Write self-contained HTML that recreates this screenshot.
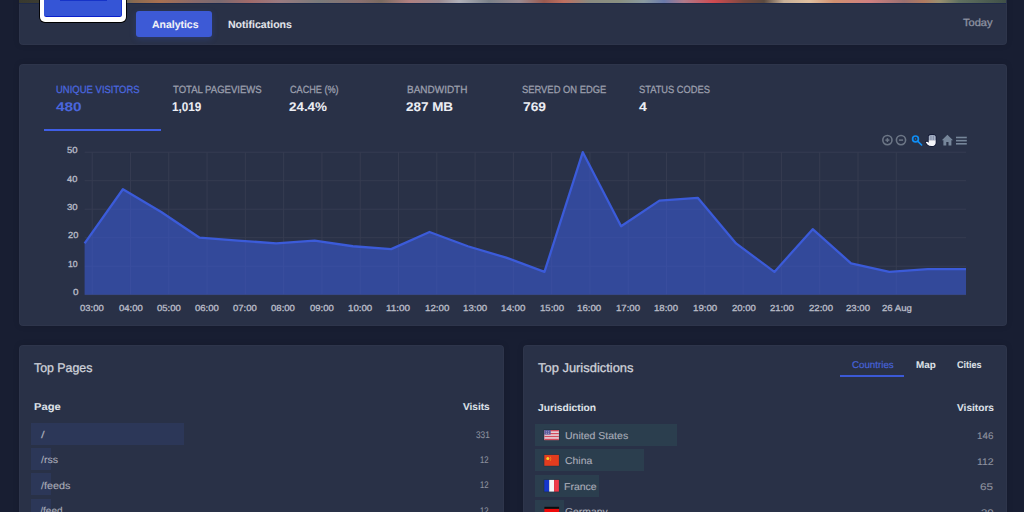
<!DOCTYPE html>
<html><head><meta charset="utf-8"><style>
html,body{margin:0;padding:0;width:1024px;height:512px;overflow:hidden;background:#181e32;font-family:"Liberation Sans",sans-serif;}
.card{position:absolute;background:#293147;border-radius:4px;box-shadow:0 0 6px rgba(0,0,0,0.12), inset 0 0 0 1px rgba(255,255,255,0.025);}
.t{position:absolute;white-space:pre;transform-origin:0 0;text-rendering:geometricPrecision;}

.ov{position:absolute;left:0;top:0;}
.bar{position:absolute;height:22.1px;}
</style></head><body>
<div class="card" style="left:19.3px;top:-20px;width:987.9px;height:64.5px;overflow:hidden;">
  <div style="position:absolute;left:0;top:20px;width:987px;height:2.8px;background:linear-gradient(90deg,#38392f 0px,#3c3c32 20px,#6a6a5a 106px,#8a6a50 115px,#a87050 140px,#8a6a6a 175px,#7a6a70 200px,#a06a6a 230px,#9a7a80 260px,#7a7a7a 300px,#8a7070 340px,#7a6a60 362px,#b08080 390px,#9a8a90 420px,#b0b0b8 440px,#7a8088 470px,#9a8a90 500px,#9a5a50 525px,#c07060 545px,#8a8a80 570px,#8a9080 600px,#8a9aa0 625px,#6a7aaa 645px,#b07a8a 665px,#d04a50 695px,#7a4a40 725px,#5a4a40 745px,#c8b098 765px,#e0c0a0 790px,#d09070 815px,#d08080 850px,#9a7070 885px,#b07a60 905px,#9a9070 920px,#607060 940px,#405048 987px);"></div>
  <div style="position:absolute;left:0;top:22.8px;width:987px;height:1px;background:#1e2a4a;"></div>
</div>
<div style="position:absolute;left:39.7px;top:-20px;width:86.4px;height:42px;background:#ffffff;border-radius:0 0 5px 5px;box-shadow:0 0 0 0.9px #000;"></div>
<div style="position:absolute;left:43.8px;top:-20px;width:78.6px;height:37px;background:#3555d6;border-radius:0 0 2.5px 2.5px;border-bottom:1.5px solid #0a20cc;border-right:0.8px solid #1a35d0;box-sizing:border-box;"></div>
<div style="position:absolute;left:60.2px;top:0px;width:46.8px;height:1.3px;background:#1633c8;"></div>
<div style="position:absolute;left:136.3px;top:10.5px;width:76px;height:26.5px;background:#3d5ad6;border-radius:3px;box-shadow:0 2px 6px rgba(61,90,214,0.25);"></div>

<div class="card" style="left:19.3px;top:64px;width:987.9px;height:261.8px;"></div>
<div style="position:absolute;left:43.6px;top:128.6px;width:117.6px;height:2.2px;background:#3f5ee6;"></div>

<div class="card" style="left:19.3px;top:344.8px;width:484.7px;height:200px;"></div>
<div class="card" style="left:523px;top:344.8px;width:484.2px;height:200px;"></div>
<div style="position:absolute;left:840px;top:374.7px;width:64.2px;height:1.9px;background:#3b59d6;"></div>

<div class="bar" style="left:31.2px;top:422.7px;width:152.5px;background:#2c3758;"></div>
<div class="bar" style="left:31.2px;top:447.9px;width:20px;background:#2c3758;"></div>
<div class="bar" style="left:31.2px;top:473.1px;width:20px;background:#2c3758;"></div>
<div class="bar" style="left:31.2px;top:498.5px;width:20px;background:#2c3758;"></div>

<div class="bar" style="left:534.6px;top:423.5px;width:142.4px;background:#2b3e4e;"></div>
<div class="bar" style="left:534.6px;top:449.2px;width:109.4px;background:#2b3e4e;"></div>
<div class="bar" style="left:534.6px;top:474.6px;width:64.0px;background:#2b3e4e;"></div>
<div class="bar" style="left:534.6px;top:499.9px;width:29.4px;background:#2b3e4e;"></div>
<svg class="ov" width="1024" height="512" viewBox="0 0 1024 512">
  <rect x="543.7" y="429.4" width="15.8" height="11.2" fill="#1c2c3c" opacity="0.6"/>
  <rect x="544.3" y="430" width="14.6" height="10.1" fill="#e6dde4"/>
  <rect x="544.3" y="430" width="14.6" height="1.4" fill="#d24a5c"/>
  <rect x="544.3" y="432.9" width="14.6" height="1.4" fill="#d24a5c"/>
  <rect x="544.3" y="435.8" width="14.6" height="1.4" fill="#d24a5c"/>
  <rect x="544.3" y="438.7" width="14.6" height="1.4" fill="#d24a5c"/>
  <rect x="544.3" y="430" width="6.4" height="4.6" fill="#5a5b9c"/>
  <g fill="#b8b8d8"><circle cx="546.3" cy="431.8" r="0.5"/><circle cx="548.6" cy="431.8" r="0.5"/><circle cx="546.3" cy="433.3" r="0.5"/><circle cx="548.6" cy="433.3" r="0.5"/></g>
  <rect x="543.7" y="454.3" width="15.8" height="12.1" fill="#1c2c3c" opacity="0.6"/>
  <rect x="544.3" y="454.9" width="14.6" height="10.9" fill="#e23c1e"/>
  <circle cx="547.8" cy="458.4" r="1.5" fill="#f8d52a"/>
  <path d="M550.2,456.6 Q551.6,458.6 550.2,461" stroke="#f0a020" stroke-width="0.6" fill="none"/>
  <rect x="543.7" y="479.3" width="15.8" height="12.9" fill="#1c2c3c" opacity="0.6"/>
  <rect x="544.3" y="479.9" width="4.9" height="11.7" fill="#1535cc"/>
  <rect x="549.2" y="479.9" width="4.9" height="11.7" fill="#f4f4f6"/>
  <rect x="554.1" y="479.9" width="4.8" height="11.7" fill="#f03848"/>
  <rect x="544.4" y="506.8" width="14.7" height="2.1" fill="#0a0e0e"/>
  <rect x="544.4" y="508.9" width="14.7" height="4" fill="#ee0a0a"/>
</svg>
<svg class="ov" width="1024" height="512" viewBox="0 0 1024 512">
<g stroke="#363c51" stroke-width="1" fill="none"><line x1="84.6" y1="294.70" x2="966.0" y2="294.70" /><line x1="84.6" y1="266.20" x2="966.0" y2="266.20" /><line x1="84.6" y1="237.70" x2="966.0" y2="237.70" /><line x1="84.6" y1="209.20" x2="966.0" y2="209.20" /><line x1="84.6" y1="180.70" x2="966.0" y2="180.70" /><line x1="84.6" y1="152.20" x2="966.0" y2="152.20" /><line x1="92.20" y1="152.2" x2="92.20" y2="294.7" /><line x1="130.49" y1="152.2" x2="130.49" y2="294.7" /><line x1="168.78" y1="152.2" x2="168.78" y2="294.7" /><line x1="207.07" y1="152.2" x2="207.07" y2="294.7" /><line x1="245.36" y1="152.2" x2="245.36" y2="294.7" /><line x1="283.65" y1="152.2" x2="283.65" y2="294.7" /><line x1="321.94" y1="152.2" x2="321.94" y2="294.7" /><line x1="360.23" y1="152.2" x2="360.23" y2="294.7" /><line x1="398.52" y1="152.2" x2="398.52" y2="294.7" /><line x1="436.81" y1="152.2" x2="436.81" y2="294.7" /><line x1="475.10" y1="152.2" x2="475.10" y2="294.7" /><line x1="513.39" y1="152.2" x2="513.39" y2="294.7" /><line x1="551.68" y1="152.2" x2="551.68" y2="294.7" /><line x1="589.97" y1="152.2" x2="589.97" y2="294.7" /><line x1="628.26" y1="152.2" x2="628.26" y2="294.7" /><line x1="666.55" y1="152.2" x2="666.55" y2="294.7" /><line x1="704.84" y1="152.2" x2="704.84" y2="294.7" /><line x1="743.13" y1="152.2" x2="743.13" y2="294.7" /><line x1="781.42" y1="152.2" x2="781.42" y2="294.7" /><line x1="819.71" y1="152.2" x2="819.71" y2="294.7" /><line x1="858.00" y1="152.2" x2="858.00" y2="294.7" /><line x1="896.29" y1="152.2" x2="896.29" y2="294.7" /></g>
<path d="M84.6,294.7 L84.60,243.40 L122.92,189.25 L161.24,212.05 L199.57,237.70 L237.89,240.55 L276.21,243.40 L314.53,240.55 L352.85,246.25 L391.17,249.10 L429.50,232.00 L467.82,246.25 L506.14,257.65 L544.46,271.90 L582.78,152.20 L621.10,226.30 L659.43,200.65 L697.75,197.80 L736.07,243.40 L774.39,271.90 L812.71,229.15 L851.03,263.35 L889.36,271.90 L927.68,269.05 L966.00,269.05 L966.0,294.7 Z" fill="rgb(61,93,223)" fill-opacity="0.55" />
<path d="M84.60,243.40 L122.92,189.25 L161.24,212.05 L199.57,237.70 L237.89,240.55 L276.21,243.40 L314.53,240.55 L352.85,246.25 L391.17,249.10 L429.50,232.00 L467.82,246.25 L506.14,257.65 L544.46,271.90 L582.78,152.20 L621.10,226.30 L659.43,200.65 L697.75,197.80 L736.07,243.40 L774.39,271.90 L812.71,229.15 L851.03,263.35 L889.36,271.90 L927.68,269.05 L966.00,269.05" fill="none" stroke="#3b5bd9" stroke-width="2.3" stroke-linejoin="round" />
<g fill="none" stroke="#6c7686" stroke-width="1.6">
  <circle cx="887.4" cy="140.1" r="4.6"/>
  <circle cx="901.0" cy="140.1" r="4.6"/>
</g>
<g stroke="#6c7686" stroke-width="1.5"><line x1="885.4" y1="140.1" x2="889.4" y2="140.1"/><line x1="887.4" y1="138.1" x2="887.4" y2="142.1"/><line x1="898.9" y1="140.1" x2="903.1" y2="140.1"/></g>
<g fill="none" stroke="#0f8ef5" stroke-width="1.7" stroke-linecap="round">
  <circle cx="915.5" cy="138.9" r="2.9"/><line x1="917.9" y1="141.4" x2="921.6" y2="145.0"/>
</g>
<circle cx="915.5" cy="138.9" r="0.7" fill="#0f8ef5"/>
<path d="M928.0,136.2 Q928.2,134.3 930.5,134.2 L933.8,134.2 Q936.3,134.3 936.4,136.6 L936.4,143.0 Q936.2,146.8 931.6,146.8 Q928.6,146.8 926.8,145.0 L924.9,142.4 Q925.4,140.3 927.9,141.0 Z" fill="#0b1230"/>
<path d="M928.7,136.6 Q928.9,135.0 930.6,134.9 L933.7,134.9 Q935.6,135.0 935.7,136.8 L935.7,140.6 L928.7,140.6 Z" fill="#a9b4c8"/>
<path d="M930.95,135.3 L930.95,140.2 M933.3,135.3 L933.3,140.2" stroke="#7987a0" stroke-width="0.9" fill="none"/>
<path d="M928.7,140.3 L935.7,140.3 L935.7,143.0 Q935.5,146.1 931.6,146.1 Q929.0,146.1 927.4,144.5 L925.7,142.3 Q926.2,141.3 927.4,141.8 L928.7,142.8 Z" fill="#f3f4f8"/>
<path d="M947.4,134.8 L953.0,140.3 L951.4,140.3 L951.4,145.5 L948.5,145.5 L948.5,142.0 L946.3,142.0 L946.3,145.5 L943.4,145.5 L943.4,140.3 L941.8,140.3 Z" fill="#76869a"/>
<g stroke="#76869a" stroke-width="1.6"><line x1="956.0" y1="137.5" x2="966.8" y2="137.5"/><line x1="956.0" y1="140.65" x2="966.8" y2="140.65"/><line x1="956.0" y1="143.8" x2="966.8" y2="143.8"/></g>
</svg>
<div class="t" style="-webkit-text-stroke:0.05px currentColor;left:151.59px;top:20.00px;font-size:10.60px;line-height:10.60px;font-weight:bold;color:#f2f3f8;transform:scaleX(0.9867);">Analytics</div><div class="t" style="-webkit-text-stroke:0.05px currentColor;left:227.54px;top:20.00px;font-size:10.60px;line-height:10.60px;font-weight:bold;color:#e2e4ea;transform:scaleX(0.9964);">Notifications</div><div class="t" style="-webkit-text-stroke:0.3px currentColor;left:963.22px;top:19.00px;font-size:10.40px;line-height:10.40px;font-weight:normal;color:#8e93a2;transform:scaleX(1.0638);">Today</div><div class="t" style="-webkit-text-stroke:0.3px currentColor;left:56.37px;top:86.00px;font-size:10.40px;line-height:10.40px;font-weight:normal;color:#4a66dd;transform:scaleX(0.9135);">UNIQUE VISITORS</div><div class="t" style="-webkit-text-stroke:0.05px currentColor;left:56.47px;top:101.00px;font-size:12.60px;line-height:12.60px;font-weight:bold;color:#4a66dd;transform:scaleX(1.2212);">480</div><div class="t" style="-webkit-text-stroke:0.3px currentColor;left:172.65px;top:86.00px;font-size:10.40px;line-height:10.40px;font-weight:normal;color:#9a9eac;transform:scaleX(0.9171);">TOTAL PAGEVIEWS</div><div class="t" style="-webkit-text-stroke:0.05px currentColor;left:171.77px;top:101.00px;font-size:12.60px;line-height:12.60px;font-weight:bold;color:#eceef4;transform:scaleX(0.9327);">1,019</div><div class="t" style="-webkit-text-stroke:0.3px currentColor;left:289.51px;top:86.00px;font-size:10.40px;line-height:10.40px;font-weight:normal;color:#9a9eac;transform:scaleX(0.8781);">CACHE (%)</div><div class="t" style="-webkit-text-stroke:0.05px currentColor;left:289.01px;top:101.00px;font-size:12.60px;line-height:12.60px;font-weight:bold;color:#eceef4;transform:scaleX(1.0635);">24.4%</div><div class="t" style="-webkit-text-stroke:0.3px currentColor;left:406.50px;top:86.00px;font-size:10.40px;line-height:10.40px;font-weight:normal;color:#9a9eac;transform:scaleX(0.9604);">BANDWIDTH</div><div class="t" style="-webkit-text-stroke:0.05px currentColor;left:406.42px;top:101.00px;font-size:12.60px;line-height:12.60px;font-weight:bold;color:#eceef4;transform:scaleX(1.0678);">287 MB</div><div class="t" style="-webkit-text-stroke:0.3px currentColor;left:522.10px;top:86.00px;font-size:10.40px;line-height:10.40px;font-weight:normal;color:#9a9eac;transform:scaleX(0.9027);">SERVED ON EDGE</div><div class="t" style="-webkit-text-stroke:0.05px currentColor;left:522.51px;top:101.00px;font-size:12.60px;line-height:12.60px;font-weight:bold;color:#eceef4;transform:scaleX(1.0950);">769</div><div class="t" style="-webkit-text-stroke:0.3px currentColor;left:639.16px;top:86.00px;font-size:10.40px;line-height:10.40px;font-weight:normal;color:#9a9eac;transform:scaleX(0.8944);">STATUS CODES</div><div class="t" style="-webkit-text-stroke:0.05px currentColor;left:639.45px;top:101.00px;font-size:12.60px;line-height:12.60px;font-weight:bold;color:#eceef4;transform:scaleX(1.1145);">4</div><div class="t" style="-webkit-text-stroke:0.3px currentColor;left:67.24px;top:146.00px;font-size:8.80px;line-height:8.80px;font-weight:normal;color:#b9bcc7;transform:scaleX(1.0843);">50</div><div class="t" style="-webkit-text-stroke:0.3px currentColor;left:67.42px;top:175.00px;font-size:8.80px;line-height:8.80px;font-weight:normal;color:#b9bcc7;transform:scaleX(1.0543);">40</div><div class="t" style="-webkit-text-stroke:0.3px currentColor;left:67.04px;top:203.00px;font-size:8.80px;line-height:8.80px;font-weight:normal;color:#b9bcc7;transform:scaleX(1.0868);">30</div><div class="t" style="-webkit-text-stroke:0.3px currentColor;left:68.09px;top:231.00px;font-size:8.80px;line-height:8.80px;font-weight:normal;color:#b9bcc7;transform:scaleX(1.0506);">20</div><div class="t" style="-webkit-text-stroke:0.3px currentColor;left:68.21px;top:260.00px;font-size:8.80px;line-height:8.80px;font-weight:normal;color:#b9bcc7;transform:scaleX(0.9875);">10</div><div class="t" style="-webkit-text-stroke:0.3px currentColor;left:72.58px;top:288.00px;font-size:8.80px;line-height:8.80px;font-weight:normal;color:#b9bcc7;transform:scaleX(1.1259);">0</div><div class="t" style="-webkit-text-stroke:0.3px currentColor;left:80.26px;top:304.00px;font-size:8.80px;line-height:8.80px;font-weight:normal;color:#b9bcc7;transform:scaleX(1.0842);">03:00</div><div class="t" style="-webkit-text-stroke:0.3px currentColor;left:118.88px;top:304.00px;font-size:8.80px;line-height:8.80px;font-weight:normal;color:#b9bcc7;transform:scaleX(1.0841);">04:00</div><div class="t" style="-webkit-text-stroke:0.3px currentColor;left:156.99px;top:304.00px;font-size:8.80px;line-height:8.80px;font-weight:normal;color:#b9bcc7;transform:scaleX(1.0836);">05:00</div><div class="t" style="-webkit-text-stroke:0.3px currentColor;left:194.98px;top:304.00px;font-size:8.80px;line-height:8.80px;font-weight:normal;color:#b9bcc7;transform:scaleX(1.0856);">06:00</div><div class="t" style="-webkit-text-stroke:0.3px currentColor;left:233.39px;top:304.00px;font-size:8.80px;line-height:8.80px;font-weight:normal;color:#b9bcc7;transform:scaleX(1.0841);">07:00</div><div class="t" style="-webkit-text-stroke:0.3px currentColor;left:271.49px;top:304.00px;font-size:8.80px;line-height:8.80px;font-weight:normal;color:#b9bcc7;transform:scaleX(1.0877);">08:00</div><div class="t" style="-webkit-text-stroke:0.3px currentColor;left:310.48px;top:304.00px;font-size:8.80px;line-height:8.80px;font-weight:normal;color:#b9bcc7;transform:scaleX(1.0856);">09:00</div><div class="t" style="-webkit-text-stroke:0.3px currentColor;left:348.45px;top:304.00px;font-size:8.80px;line-height:8.80px;font-weight:normal;color:#b9bcc7;transform:scaleX(1.1024);">10:00</div><div class="t" style="-webkit-text-stroke:0.3px currentColor;left:386.15px;top:304.00px;font-size:8.80px;line-height:8.80px;font-weight:normal;color:#b9bcc7;transform:scaleX(1.1293);">11:00</div><div class="t" style="-webkit-text-stroke:0.3px currentColor;left:424.81px;top:304.00px;font-size:8.80px;line-height:8.80px;font-weight:normal;color:#b9bcc7;transform:scaleX(1.1079);">12:00</div><div class="t" style="-webkit-text-stroke:0.3px currentColor;left:462.95px;top:304.00px;font-size:8.80px;line-height:8.80px;font-weight:normal;color:#b9bcc7;transform:scaleX(1.0996);">13:00</div><div class="t" style="-webkit-text-stroke:0.3px currentColor;left:501.00px;top:304.00px;font-size:8.80px;line-height:8.80px;font-weight:normal;color:#b9bcc7;transform:scaleX(1.1088);">14:00</div><div class="t" style="-webkit-text-stroke:0.3px currentColor;left:539.96px;top:304.00px;font-size:8.80px;line-height:8.80px;font-weight:normal;color:#b9bcc7;transform:scaleX(1.0913);">15:00</div><div class="t" style="-webkit-text-stroke:0.3px currentColor;left:577.46px;top:304.00px;font-size:8.80px;line-height:8.80px;font-weight:normal;color:#b9bcc7;transform:scaleX(1.0996);">16:00</div><div class="t" style="-webkit-text-stroke:0.3px currentColor;left:616.47px;top:304.00px;font-size:8.80px;line-height:8.80px;font-weight:normal;color:#b9bcc7;transform:scaleX(1.0935);">17:00</div><div class="t" style="-webkit-text-stroke:0.3px currentColor;left:654.48px;top:304.00px;font-size:8.80px;line-height:8.80px;font-weight:normal;color:#b9bcc7;transform:scaleX(1.0913);">18:00</div><div class="t" style="-webkit-text-stroke:0.3px currentColor;left:693.03px;top:304.00px;font-size:8.80px;line-height:8.80px;font-weight:normal;color:#b9bcc7;transform:scaleX(1.1024);">19:00</div><div class="t" style="-webkit-text-stroke:0.3px currentColor;left:731.59px;top:304.00px;font-size:8.80px;line-height:8.80px;font-weight:normal;color:#b9bcc7;transform:scaleX(1.0846);">20:00</div><div class="t" style="-webkit-text-stroke:0.3px currentColor;left:769.62px;top:304.00px;font-size:8.80px;line-height:8.80px;font-weight:normal;color:#b9bcc7;transform:scaleX(1.0843);">21:00</div><div class="t" style="-webkit-text-stroke:0.3px currentColor;left:808.58px;top:304.00px;font-size:8.80px;line-height:8.80px;font-weight:normal;color:#b9bcc7;transform:scaleX(1.0895);">22:00</div><div class="t" style="-webkit-text-stroke:0.3px currentColor;left:846.13px;top:304.00px;font-size:8.80px;line-height:8.80px;font-weight:normal;color:#b9bcc7;transform:scaleX(1.0895);">23:00</div><div class="t" style="-webkit-text-stroke:0.3px currentColor;left:882.06px;top:304.00px;font-size:8.80px;line-height:8.80px;font-weight:normal;color:#b9bcc7;transform:scaleX(1.0889);">26 Aug</div><div class="t" style="-webkit-text-stroke:0.3px currentColor;left:34.21px;top:362.00px;font-size:12.60px;line-height:12.60px;font-weight:normal;color:#cfd1da;transform:scaleX(0.9810);">Top Pages</div><div class="t" style="-webkit-text-stroke:0.05px currentColor;left:33.61px;top:403.00px;font-size:10.00px;line-height:10.00px;font-weight:bold;color:#dfe1e8;transform:scaleX(1.1144);">Page</div><div class="t" style="-webkit-text-stroke:0.05px currentColor;left:463.43px;top:403.00px;font-size:10.00px;line-height:10.00px;font-weight:bold;color:#dfe1e8;transform:scaleX(1.0083);">Visits</div><div class="t" style="-webkit-text-stroke:0.12px currentColor;left:40.72px;top:431.00px;font-size:10.00px;line-height:10.00px;font-weight:normal;color:#a9acb8;transform:scaleX(1.3268);">/</div><div class="t" style="-webkit-text-stroke:0.12px currentColor;left:475.52px;top:431.00px;font-size:9.60px;line-height:9.60px;font-weight:normal;color:#8d919f;transform:scaleX(0.8596);">331</div><div class="t" style="-webkit-text-stroke:0.12px currentColor;left:40.52px;top:456.00px;font-size:10.00px;line-height:10.00px;font-weight:normal;color:#a9acb8;transform:scaleX(1.0578);">/rss</div><div class="t" style="-webkit-text-stroke:0.12px currentColor;left:480.16px;top:456.00px;font-size:9.60px;line-height:9.60px;font-weight:normal;color:#8d919f;transform:scaleX(0.7964);">12</div><div class="t" style="-webkit-text-stroke:0.12px currentColor;left:40.52px;top:482.00px;font-size:10.00px;line-height:10.00px;font-weight:normal;color:#a9acb8;transform:scaleX(1.0807);">/feeds</div><div class="t" style="-webkit-text-stroke:0.12px currentColor;left:480.16px;top:481.00px;font-size:9.60px;line-height:9.60px;font-weight:normal;color:#8d919f;transform:scaleX(0.7964);">12</div><div class="t" style="-webkit-text-stroke:0.12px currentColor;left:40.31px;top:507.00px;font-size:10.00px;line-height:10.00px;font-weight:normal;color:#a9acb8;">/feed</div><div class="t" style="-webkit-text-stroke:0.12px currentColor;left:480.16px;top:507.00px;font-size:9.60px;line-height:9.60px;font-weight:normal;color:#8d919f;transform:scaleX(0.7964);">12</div><div class="t" style="-webkit-text-stroke:0.3px currentColor;left:537.78px;top:362.00px;font-size:12.60px;line-height:12.60px;font-weight:normal;color:#cfd1da;transform:scaleX(1.0258);">Top Jurisdictions</div><div class="t" style="-webkit-text-stroke:0.2px currentColor;left:852.03px;top:361.00px;font-size:9.80px;line-height:9.80px;font-weight:normal;color:#4762d8;transform:scaleX(0.9944);">Countries</div><div class="t" style="-webkit-text-stroke:0.05px currentColor;left:915.78px;top:361.00px;font-size:9.80px;line-height:9.80px;font-weight:bold;color:#dfe1e8;transform:scaleX(1.0064);">Map</div><div class="t" style="-webkit-text-stroke:0.05px currentColor;left:957.35px;top:361.00px;font-size:9.80px;line-height:9.80px;font-weight:bold;color:#dfe1e8;transform:scaleX(0.9204);">Cities</div><div class="t" style="-webkit-text-stroke:0.05px currentColor;left:537.82px;top:404.00px;font-size:10.00px;line-height:10.00px;font-weight:bold;color:#dfe1e8;transform:scaleX(1.0235);">Jurisdiction</div><div class="t" style="-webkit-text-stroke:0.05px currentColor;left:956.73px;top:404.00px;font-size:10.00px;line-height:10.00px;font-weight:bold;color:#dfe1e8;transform:scaleX(1.0123);">Visitors</div><div class="t" style="-webkit-text-stroke:0.12px currentColor;left:564.71px;top:432.00px;font-size:10.00px;line-height:10.00px;font-weight:normal;color:#a9acb8;transform:scaleX(1.0517);">United States</div><div class="t" style="-webkit-text-stroke:0.12px currentColor;left:977.28px;top:432.00px;font-size:9.60px;line-height:9.60px;font-weight:normal;color:#8d919f;transform:scaleX(1.0231);">146</div><div class="t" style="-webkit-text-stroke:0.12px currentColor;left:564.97px;top:457.00px;font-size:10.00px;line-height:10.00px;font-weight:normal;color:#a9acb8;transform:scaleX(1.0423);">China</div><div class="t" style="-webkit-text-stroke:0.12px currentColor;left:977.23px;top:458.00px;font-size:9.60px;line-height:9.60px;font-weight:normal;color:#8d919f;transform:scaleX(1.0903);">112</div><div class="t" style="-webkit-text-stroke:0.12px currentColor;left:563.91px;top:483.00px;font-size:10.00px;line-height:10.00px;font-weight:normal;color:#a9acb8;transform:scaleX(1.0494);">France</div><div class="t" style="-webkit-text-stroke:0.12px currentColor;left:980.25px;top:483.00px;font-size:9.60px;line-height:9.60px;font-weight:normal;color:#8d919f;transform:scaleX(1.2190);">65</div><div class="t" style="-webkit-text-stroke:0.12px currentColor;left:564.60px;top:508.00px;font-size:10.00px;line-height:10.00px;font-weight:normal;color:#a9acb8;transform:scaleX(1.0352);">Germany</div><div class="t" style="-webkit-text-stroke:0.12px currentColor;left:980.85px;top:509.00px;font-size:9.60px;line-height:9.60px;font-weight:normal;color:#8d919f;transform:scaleX(1.1871);">30</div>
</body></html>
